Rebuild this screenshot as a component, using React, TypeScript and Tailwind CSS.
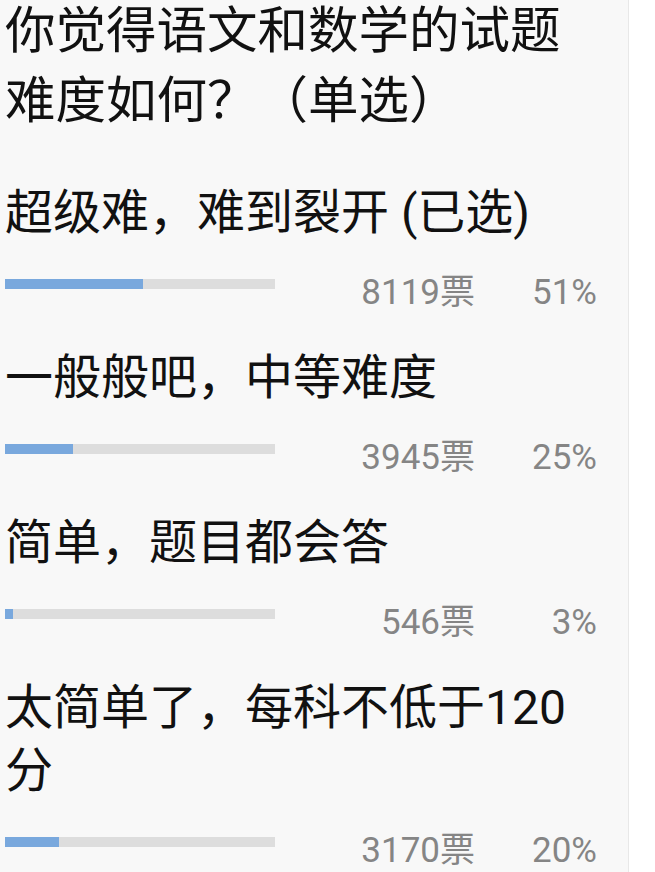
const options = [
  { label: '超级难，难到裂开 (已选)', votes: 8119, pct: 51 },
  { label: '一般般吧，中等难度', votes: 3945, pct: 25 },
  { label: '简单，题目都会答', votes: 546, pct: 3 },
  { label: '太简单了，每科不低于120分', votes: 3170, pct: 20 },
]

const font = { fontFamily: 'Roboto, "Noto Sans CJK SC", sans-serif' }

function PollOption({ label, votes, pct }: { label: string; votes: number; pct: number }) {
  return (
    <div className="pb-[33px]">
      <div className="text-[48px] leading-[63px] text-[#111]">{label}</div>
      <div className="mt-[29px] flex h-[40px] items-start">
        <div className="mt-[6px] h-[10px] w-[270px] bg-[#dddddd]">
          <div className="h-full bg-[#79a8dd]" style={{ width: `${pct}%` }} />
        </div>
        <div className="flex-1" />
        <span className="text-[35px] leading-[40px] text-[#858585]">{votes}票</span>
        <span className="w-[122px] text-right text-[35px] leading-[40px] text-[#858585]">{pct}%</span>
      </div>
    </div>
  )
}

export default function App() {
  return (
    <div className="flex min-h-[872px] bg-white" style={font}>
      <div className="w-[628px] overflow-hidden bg-[#f8f8f8] pl-[5px] pr-[31px]">
        <h1 className="-mt-[4px] mb-[45px] text-[50.5px] font-normal leading-[70px] text-[#111]">
          你觉得语文和数学的试题难度如何？（单选）
        </h1>
        {options.map(o => (
          <PollOption key={o.label} {...o} />
        ))}
      </div>
      <div className="w-px bg-[#e8e8e8]" />
      <div className="flex-1 bg-white" />
    </div>
  )
}
